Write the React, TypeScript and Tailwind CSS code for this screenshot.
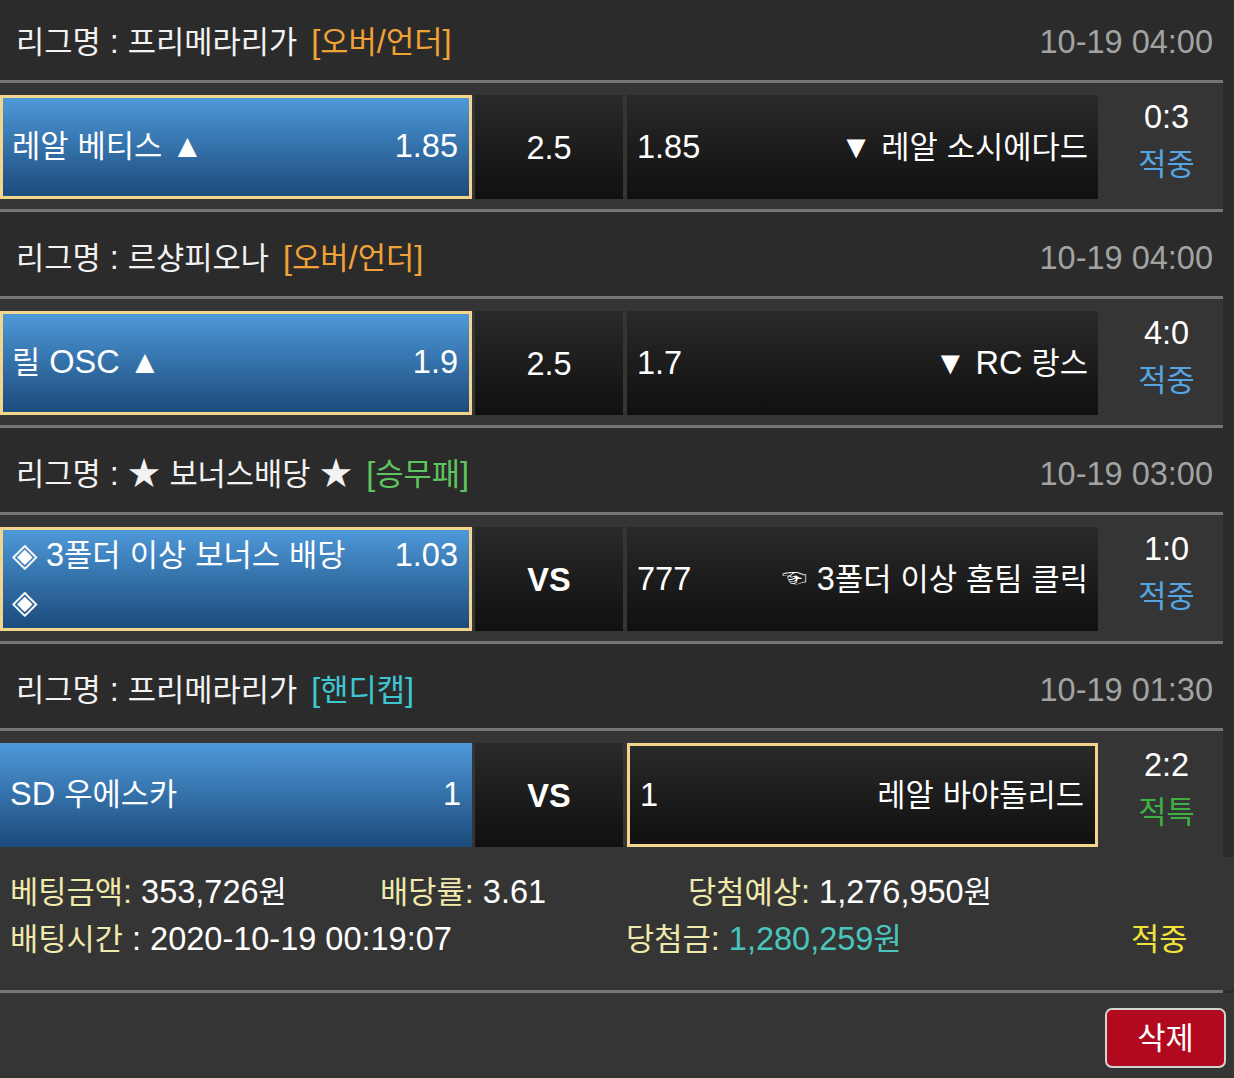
import React from "react";

const HANGUL = /([\uAC00-\uD7A3]+)/;

function T({ s }: { s: string }) {
  const parts = s.split(HANGUL);
  return (
    <span>
      {parts.map((p, i) =>
        i % 2 === 1 ? (
          <span key={i} className="text-[0.945em]">
            {p}
          </span>
        ) : (
          <React.Fragment key={i}>{p}</React.Fragment>
        )
      )}
    </span>
  );
}

type Bet = {
  league: string;
  type: string;
  typeColor: string;
  time: string;
  home: string[];
  homeOdds: string;
  homeSel: boolean;
  mid: string;
  midBold: boolean;
  awayOdds: string;
  away: React.ReactNode;
  awaySel: boolean;
  score: string;
  result: string;
  resultColor: string;
};

const bets: Bet[] = [
  {
    league: "프리메라리가",
    type: "[오버/언더]",
    typeColor: "text-[#f0a236]",
    time: "10-19 04:00",
    home: ["레알 베티스 ▲"],
    homeOdds: "1.85",
    homeSel: true,
    mid: "2.5",
    midBold: false,
    awayOdds: "1.85",
    away: <T s="▼ 레알 소시에다드" />,
    awaySel: false,
    score: "0:3",
    result: "적중",
    resultColor: "text-[#55a5e3]",
  },
  {
    league: "르샹피오나",
    type: "[오버/언더]",
    typeColor: "text-[#f0a236]",
    time: "10-19 04:00",
    home: ["릴 OSC ▲"],
    homeOdds: "1.9",
    homeSel: true,
    mid: "2.5",
    midBold: false,
    awayOdds: "1.7",
    away: <T s="▼ RC 랑스" />,
    awaySel: false,
    score: "4:0",
    result: "적중",
    resultColor: "text-[#55a5e3]",
  },
  {
    league: "★ 보너스배당 ★",
    type: "[승무패]",
    typeColor: "text-[#5ec55e]",
    time: "10-19 03:00",
    home: ["◈ 3폴더 이상 보너스 배당", "◈"],
    homeOdds: "1.03",
    homeSel: true,
    mid: "VS",
    midBold: true,
    awayOdds: "777",
    away: (
      <span className="flex items-center">
        <span className="text-[25px] mr-[10px]">☜</span>
        <T s="3폴더 이상 홈팀 클릭" />
      </span>
    ),
    awaySel: false,
    score: "1:0",
    result: "적중",
    resultColor: "text-[#55a5e3]",
  },
  {
    league: "프리메라리가",
    type: "[핸디캡]",
    typeColor: "text-[#3fc6d3]",
    time: "10-19 01:30",
    home: ["SD 우에스카"],
    homeOdds: "1",
    homeSel: false,
    mid: "VS",
    midBold: true,
    awayOdds: "1",
    away: <T s="레알 바야돌리드" />,
    awaySel: true,
    score: "2:2",
    result: "적특",
    resultColor: "text-[#3cb043]",
  },
];

function Sep() {
  return <div className="h-[3px] w-[1223px] bg-[#767676]" />;
}

function Block({ b, first, last }: { b: Bet; first: boolean; last: boolean }) {
  return (
    <div className="w-[1223px]">
      <div
        className={`flex items-center justify-between pl-[16px] pr-[10px] bg-[#2b2b2b] ${
          first ? "h-[80px] pt-[5px]" : "h-[84px] pt-[8px]"
        }`}
      >
        <div className="text-[#f2f2f2] whitespace-nowrap">
          <T s={`리그명 : ${b.league}`} />
          <span className={`ml-[14px] ${b.typeColor}`}>
            <T s={b.type} />
          </span>
        </div>
        <div className="text-[#a3a3a3]">{b.time}</div>
      </div>
      <Sep />
      <div className="flex bg-[#353535] pt-[12px] pb-[10px]">
        <div
          className={`w-[472px] h-[104px] bg-linear-to-b from-[#4e99d9] to-[#1c4b7c] flex items-center pr-[11px] ${
            b.homeSel ? "border-[3px] border-[#f3d68b] pl-[9px]" : "pl-[10px]"
          }`}
        >
          <div className="flex w-full items-start justify-between leading-[46px] -mt-[2px]">
            <div>
              {b.home.map((l, i) => (
                <div key={i} className="whitespace-nowrap">
                  <T s={l} />
                </div>
              ))}
            </div>
            <div>{b.homeOdds}</div>
          </div>
        </div>
        <div
          className={`ml-[3px] w-[148px] h-[104px] bg-linear-to-b from-[#2a2a2a] to-[#101010] flex items-center justify-center pt-[2px] ${
            b.midBold ? "font-bold" : ""
          }`}
        >
          {b.mid}
        </div>
        <div
          className={`ml-[4px] w-[471px] h-[104px] bg-linear-to-b from-[#2a2a2a] to-[#101010] flex items-center justify-between ${
            b.awaySel ? "border-[3px] border-[#f3d68b] pl-[10px] pr-[11px]" : "pl-[10px] pr-[10px]"
          }`}
        >
          <div>{b.awayOdds}</div>
          <div className="whitespace-nowrap">{b.away}</div>
        </div>
        <div className="w-[125px] pl-[12px] flex flex-col items-center leading-[45px]">
          <div>{b.score}</div>
          <div className={`${b.resultColor} pt-[2px]`}>
            <T s={b.result} />
          </div>
        </div>
      </div>
      {!last && <Sep />}
    </div>
  );
}

export default function App() {
  return (
    <div className="w-[1234px] h-[1078px] overflow-hidden bg-[#2b2b2b] text-white text-[32.5px] font-['Liberation_Sans','Noto_Sans_CJK_KR',sans-serif]">
      {bets.map((b, i) => (
        <Block key={i} b={b} first={i === 0} last={i === bets.length - 1} />
      ))}
      <div className="h-[133px] bg-[#353535] pt-[12px] pl-[10px] leading-[46px]">
        <div className="flex whitespace-nowrap">
          <div className="w-[370px]">
            <span className="text-[#efe9ab]">
              <T s="베팅금액: " />
            </span>
            <T s="353,726원" />
          </div>
          <div className="w-[308px]">
            <span className="text-[#efe9ab]">
              <T s="배당률: " />
            </span>
            3.61
          </div>
          <div>
            <span className="text-[#efe9ab]">
              <T s="당첨예상: " />
            </span>
            <T s="1,276,950원" />
          </div>
        </div>
        <div className="flex whitespace-nowrap">
          <div className="w-[616px]">
            <span className="text-[#efe9ab]">
              <T s="배팅시간" />
            </span>{" "}
            : 2020-10-19 00:19:07
          </div>
          <div className="w-[505px]">
            <span className="text-[#efe9ab]">
              <T s="당첨금: " />
            </span>
            <span className="text-[#48c6be]">
              <T s="1,280,259원" />
            </span>
          </div>
          <div className="text-[#f2e23a]">
            <T s="적중" />
          </div>
        </div>
      </div>
      <Sep />
      <div className="h-[85px] bg-[#353535] flex justify-end items-start pt-[15px] pr-[8px]">
        <button className="w-[121px] h-[60px] rounded-[7px] border-2 border-[#d4d4d4] bg-[#b1091d] text-white flex items-center justify-center">
          <T s="삭제" />
        </button>
      </div>
    </div>
  );
}
